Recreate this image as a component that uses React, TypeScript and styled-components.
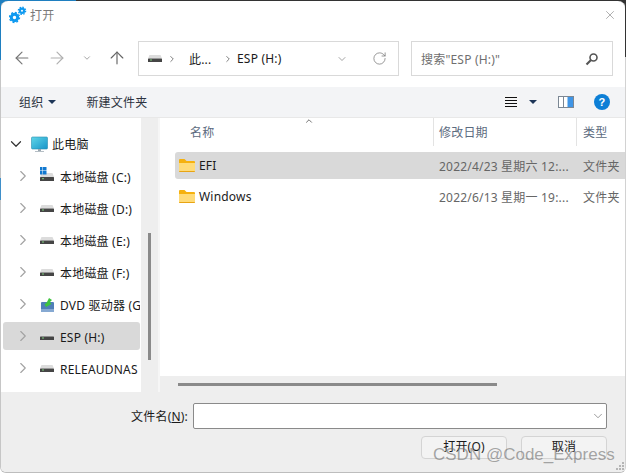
import React from "react";
import styled, { createGlobalStyle } from "styled-components";
import { ArrowLeft, ArrowRight, ArrowUp, ChevronDown, ChevronRight, RotateCw, X } from "lucide-react";

const Global = createGlobalStyle`
  html, body { margin: 0; padding: 0; background: #fff; }
  * { box-sizing: border-box; }
`;

const Backdrop = styled.div`
  width: 626px;
  height: 473px;
  overflow: hidden;
  background-color: #fff;
  background-image: linear-gradient(90deg, #1f7fc0 0 76px, #333 76px);
  background-size: 100% 20px;
  background-repeat: no-repeat;
  padding-top: 1px;
  position: relative;
`;

const Win = styled.div`
  width: 626px;
  height: 472px;
  background: #fff;
  border-radius: 8px 8px 6px 6px;
  border-left: 1px solid #c6c6c6;
  border-right: 1px solid #d2d2d2;
  border-bottom: 1px solid #bdbdbd;
  display: flex;
  flex-direction: column;
  font-family: "Noto Sans", "Noto Sans CJK SC", sans-serif;
  font-size: 12px;
  letter-spacing: 0.2px;
  color: #1a1a1a;
  overflow: hidden;
`;

const EdgeMark = styled.div<{ $left: number; $top: number; $h: number; $color: string }>`
  position: absolute;
  left: ${(p) => p.$left}px;
  top: ${(p) => p.$top}px;
  width: 1px;
  height: ${(p) => p.$h}px;
  background: ${(p) => p.$color};
`;

const TitleBar = styled.div`
  height: 28px;
  flex: none;
  display: flex;
  align-items: center;
  padding: 0 8px 0 8px;
  gap: 3px;
  color: #7a7a7a;
  font-size: 12px;
`;

const TitleText = styled.span`
  flex: 1;
`;

const AddressRow = styled.div`
  height: 58px;
  flex: none;
  display: flex;
  align-items: flex-start;
  padding: 12px 12px 11px 0;
`;

const NavGroup = styled.div`
  width: 137px;
  height: 33px;
  flex: none;
  display: flex;
  align-items: center;
  padding-left: 11px;
`;

const NavBtn = styled.span<{ $w: number }>`
  width: ${(p) => p.$w}px;
  flex: none;
  display: flex;
  align-items: center;
  color: #777;
`;

const AddressBox = styled.div`
  width: 261px;
  height: 35px;
  flex: none;
  border: 1px solid #d9d9d9;
  display: flex;
  align-items: center;
  padding: 0 0 0 9px;
  font-size: 12px;
`;

const Crumb = styled.span<{ $w: number }>`
  width: ${(p) => p.$w}px;
  flex: none;
  display: flex;
  align-items: center;
`;

const SearchBox = styled.div`
  width: 202px;
  height: 35px;
  margin-left: 12px;
  flex: none;
  border: 1px solid #d9d9d9;
  display: flex;
  align-items: center;
  justify-content: space-between;
  padding: 0 13px 0 9px;
  color: #6f6f6f;
`;

const Toolbar = styled.div`
  height: 31px;
  flex: none;
  background: #f3f4f6;
  border-bottom: 1px solid #e8e8e8;
  display: flex;
  align-items: center;
  padding: 0 15px 0 18px;
  color: #2c3340;
`;

const ToolItem = styled.span`
  display: flex;
  align-items: center;
  gap: 5px;
  margin-right: 30px;
`;

const Caret = styled.span`
  width: 0;
  height: 0;
  border-left: 4px solid transparent;
  border-right: 4px solid transparent;
  border-top: 4px solid #1d3557;
  display: inline-block;
`;

const Spacer = styled.div`
  flex: 1;
`;

const ViewIcon = styled.span`
  width: 16px;
  height: 16px;
  background: #f6f6f6;
  display: flex;
  align-items: center;
  justify-content: center;
  margin-right: 10px;
`;

const PaneIcon = styled.span`
  display: flex;
  margin: 0 20px 0 21px;
`;

const HelpIcon = styled.span`
  width: 16px;
  height: 16px;
  border-radius: 50%;
  background: #0d7fd6;
  color: #fff;
  font: bold 11px/16px "Liberation Sans", sans-serif;
  text-align: center;
`;

const Main = styled.div`
  flex: 1;
  min-height: 0;
  display: flex;
`;

const Sidebar = styled.div`
  width: 140px;
  flex: none;
  padding: 12px 0 0 2px;
  overflow: hidden;
`;

const TreeRow = styled.div<{ $selected?: boolean; $top?: boolean }>`
  height: 28px;
  margin-bottom: 4px;
  width: 137px;
  border-radius: 3px;
  background: ${(p) => (p.$selected ? "#d9d9d9" : "transparent")};
  display: flex;
  align-items: center;
  padding-left: ${(p) => (p.$top ? 4 : 11)}px;
  white-space: nowrap;
  overflow: hidden;
`;

const DriveLabel = styled.span`
  padding-top: 2px;
`;

const Chevron = styled.span<{ $w: number }>`
  width: ${(p) => p.$w}px;
  flex: none;
  display: flex;
  color: #a2a2a2;
`;

const DriveSlot = styled.span`
  width: 20px;
  flex: none;
  display: flex;
  position: relative;
  top: 1px;
`;

const SideScroll = styled.div`
  width: 17px;
  flex: none;
  background: #eeeeee;
  padding: 115px 0 0 7px;
`;

const SideThumb = styled.div`
  width: 3px;
  height: 127px;
  background: #8a8a8a;
`;

const Gutter = styled.div`
  width: 2px;
  flex: none;
  background: #f6f6f6;
`;

const Content = styled.div`
  flex: 1;
  min-width: 0;
  display: flex;
  flex-direction: column;
`;

const HeaderRow = styled.div`
  height: 28px;
  flex: none;
  display: flex;
  color: #5c6b80;
  position: relative;
`;

const SortMark = styled.span`
  position: absolute;
  left: 144px;
  top: -2px;
  display: flex;
  color: #555;
`;

const HeadCell = styled.div<{ $w: number; $pad: number; $line?: boolean }>`
  width: ${(p) => p.$w}px;
  flex: none;
  padding: 1px 0 0 ${(p) => p.$pad}px;
  line-height: 28px;
  border-right: ${(p) => (p.$line ? "1px solid #e3e3e3" : "none")};
`;

const FileList = styled.div`
  flex: 1;
  padding: 6px 0 0 15px;
`;

const FileRow = styled.div<{ $selected?: boolean }>`
  height: 27px;
  margin-bottom: 4px;
  display: flex;
  align-items: center;
  border-radius: 3px 0 0 3px;
  background: ${(p) => (p.$selected ? "#d9d9d9" : "transparent")};
  padding-left: 4px;
  white-space: nowrap;
`;

const FileName = styled.span`
  width: 260px;
  flex: none;
  display: flex;
  align-items: center;
  gap: 4px;
`;

const FileDate = styled.span`
  width: 144px;
  flex: none;
  color: #666;
`;

const FileType = styled.span`
  color: #666;
`;

const HScroll = styled.div`
  height: 16px;
  flex: none;
  background: #eeeeee;
  padding: 7px 0 0 18px;
`;

const HThumb = styled.div`
  width: 319px;
  height: 3px;
  background: #8a8a8a;
`;

const Footer = styled.div`
  height: 80px;
  flex: none;
  background: #eeeeee;
  padding: 11px 18px 0 0;
  position: relative;
`;

const NameRow = styled.div`
  display: flex;
  align-items: center;
  justify-content: flex-end;
  gap: 5px;
`;

const NameLabel = styled.span`
  color: #1a1a1a;
  & u { text-underline-offset: 1px; }
`;

const NameInput = styled.div`
  width: 414px;
  height: 26px;
  background: #fff;
  border: 1px solid #8a8a8a;
  border-radius: 2px;
  display: flex;
  align-items: center;
  justify-content: flex-end;
  padding-right: 1px;
  color: #666;
`;

const Buttons = styled.div`
  display: flex;
  justify-content: flex-end;
  gap: 14px;
  margin-top: 7px;
`;

const Btn = styled.div`
  width: 86px;
  height: 23px;
  border: 1px solid #d4d4d4;
  border-radius: 4px;
  background: #f3f3f3;
  text-align: center;
  line-height: 20px;
  color: #1a1a1a;
`;

const Watermark = styled.div`
  position: absolute;
  left: 433px;
  top: 445px;
  font-family: "Liberation Sans", sans-serif;
  font-size: 17px;
  line-height: 20px;
  color: rgba(110, 110, 110, 0.6);
  white-space: nowrap;
`;

const Grip = styled.svg`
  position: absolute;
  right: 0;
  bottom: 1px;
`;

const Gears = () => (
  <svg width="18" height="18" viewBox="0 0 18 18">
    <g fill="none" stroke="#0f9af0">
      <circle cx="5.500" cy="11.500" r="3.200" strokeWidth="3" />
      <circle cx="5.500" cy="11.500" r="5" strokeWidth="1.400" strokeDasharray="1.900 2" />
      <circle cx="13" cy="4.800" r="2.100" strokeWidth="2.200" />
      <circle cx="13" cy="4.800" r="3.700" strokeWidth="1.200" strokeDasharray="1.500 1.400" />
    </g>
  </svg>
);

const Drive = () => (
  <svg width="16" height="12" viewBox="0 0 16 12">
    <path d="M1.500 2 H12.500 L14 5.500 H0 Z" fill="#dcdcdc" />
    <rect x="0" y="5.500" width="14" height="3.500" rx=".6" fill="#454545" />
    <rect x="2" y="6.500" width="2" height="1" fill="#7fd07f" />
  </svg>
);

const SysDrive = () => (
  <svg width="16" height="20" viewBox="0 0 16 20">
    <path d="M1.500 6 H12.500 L14 10 H0 Z" fill="#dcdcdc" />
    <rect x="0" y="10" width="14" height="4" rx=".6" fill="#454545" />
    <rect x="2" y="11.200" width="2" height="1" fill="#7fd07f" />
    <rect x="-1" y="0" width="3.500" height="3.500" fill="#1279d0" />
    <rect x="3" y="0" width="3.500" height="3.500" fill="#1279d0" />
    <rect x="-1" y="4" width="3.500" height="3.500" fill="#1279d0" />
    <rect x="3" y="4" width="3.500" height="3.500" fill="#1279d0" />
  </svg>
);

const Dvd = () => (
  <svg width="16" height="16" viewBox="0 0 16 16">
    <rect x="1" y="5" width="13" height="10" rx="1" fill="#4f7fb8" />
    <path d="M1 12 H14 V15 H1 Z" fill="#86a9d2" />
    <path d="M9 1 L12 3 L10 5 L11.500 7 L6 10 L4.500 7 L6 6.500 L7.500 4 Z" fill="#3ec43e" />
  </svg>
);

const Monitor = () => (
  <svg width="17" height="17" viewBox="0 0 17 17" style={{ display: "block" }}>
    <defs>
      <linearGradient id="scr" x1="0" y1="0" x2="1" y2="1">
        <stop offset="0" stopColor="#5fd6e8" />
        <stop offset="1" stopColor="#1794c9" />
      </linearGradient>
    </defs>
    <rect x="0.500" y="1" width="16" height="12" rx="1" fill="url(#scr)" stroke="#2a8fb0" strokeWidth=".6" />
    <rect x="7" y="13" width="3" height="2" fill="#9aa7b0" />
    <rect x="4" y="15" width="9" height="1" fill="#b5bec5" />
  </svg>
);

const Folder = () => (
  <svg width="16" height="13" viewBox="0 0 16 13">
    <path d="M0 1 Q0 0 1 0 H5.500 L7.500 2 H15 Q16 2 16 3 V5 H0 Z" fill="#f5b10f" />
    <path d="M0 4 H16 V12 Q16 13 15 13 H1 Q0 13 0 12 Z" fill="#ffdb78" />
    <path d="M0 12 H16 V12.300 Q16 13 15 13 H1 Q0 13 0 12.300 Z" fill="#e8a413" />
  </svg>
);

const Search = () => (
  <svg width="14" height="14" viewBox="0 0 14 14" fill="none" stroke="#555">
    <circle cx="8.500" cy="5.500" r="3.500" strokeWidth="1.600" />
    <path d="M6 8 L1.500 12.500" strokeWidth="2.200" />
  </svg>
);

const Lines = () => (
  <svg width="12" height="10" viewBox="0 0 12 10" fill="#111">
    <rect y="0" width="12" height="1" />
    <rect y="3" width="12" height="1" />
    <rect y="6" width="12" height="1" />
    <rect y="9" width="12" height="1" />
  </svg>
);

const Pane = () => (
  <svg width="16" height="12" viewBox="0 0 16 12">
    <rect x=".5" y=".5" width="15" height="11" fill="#fff" stroke="#7b8794" />
    <rect x="5" y="1" width="1" height="10" fill="#7b8794" />
    <rect x="9.500" y="1" width="5.500" height="10" fill="#3f95e6" />
  </svg>
);

const drives = [
  { label: "本地磁盘 (C:)", icon: <SysDrive /> },
  { label: "本地磁盘 (D:)", icon: <Drive /> },
  { label: "本地磁盘 (E:)", icon: <Drive /> },
  { label: "本地磁盘 (F:)", icon: <Drive /> },
  { label: "DVD 驱动器 (G:)", icon: <Dvd /> },
  { label: "ESP (H:)", icon: <Drive />, selected: true },
  { label: "RELEAUDNAS", icon: <Drive /> },
];

export default function App() {
  return (
    <Backdrop>
      <Global />
      <Win>
        <TitleBar>
          <Gears />
          <TitleText>打开</TitleText>
          <X size={14} strokeWidth={1} color="#777" />
        </TitleBar>
        <AddressRow>
          <NavGroup>
            <NavBtn $w={35}><ArrowLeft size={20} strokeWidth={1.4} /></NavBtn>
            <NavBtn $w={35}><ArrowRight size={20} strokeWidth={1.4} color="#b0b0b0" /></NavBtn>
            <NavBtn $w={25}><ChevronDown size={10} strokeWidth={1.6} /></NavBtn>
            <NavBtn $w={20}><ArrowUp size={20} strokeWidth={1.4} color="#666" /></NavBtn>
          </NavGroup>
          <AddressBox>
            <Crumb $w={19}><Drive /></Crumb>
            <Crumb $w={22}><ChevronRight size={10} strokeWidth={2} color="#666" /></Crumb>
            <Crumb $w={34}>此...</Crumb>
            <Crumb $w={14}><ChevronRight size={10} strokeWidth={2} color="#666" /></Crumb>
            <Crumb $w={99}>ESP (H:)</Crumb>
            <Crumb $w={36}><ChevronDown size={12} strokeWidth={1.2} color="#666" /></Crumb>
            <RotateCw size={15} strokeWidth={1.2} color="#777" />
          </AddressBox>
          <SearchBox>
            <span>搜索"ESP (H:)"</span>
            <Search />
          </SearchBox>
        </AddressRow>
        <Toolbar>
          <ToolItem>组织 <Caret /></ToolItem>
          <ToolItem>新建文件夹</ToolItem>
          <Spacer />
          <ViewIcon><Lines /></ViewIcon>
          <Caret />
          <PaneIcon><Pane /></PaneIcon>
          <HelpIcon>?</HelpIcon>
        </Toolbar>
        <Main>
          <Sidebar>
            <TreeRow $top>
              <Chevron $w={24}><ChevronDown size={18} strokeWidth={1.6} color="#333" /></Chevron>
              <Chevron $w={21}><Monitor /></Chevron>
              <span>此电脑</span>
            </TreeRow>
            {drives.map((d) => (
              <TreeRow key={d.label} $selected={d.selected}>
                <Chevron $w={26}><ChevronRight size={18} strokeWidth={1.5} /></Chevron>
                <DriveSlot>{d.icon}</DriveSlot>
                <DriveLabel>{d.label}</DriveLabel>
              </TreeRow>
            ))}
          </Sidebar>
          <SideScroll><SideThumb /></SideScroll>
          <Gutter />
          <Content>
            <HeaderRow>
              <SortMark><ChevronDown size={10} style={{ transform: "rotate(180deg)" }} /></SortMark>
              <HeadCell $w={274} $pad={30} $line>名称</HeadCell>
              <HeadCell $w={143} $pad={5} $line>修改日期</HeadCell>
              <HeadCell $w={48} $pad={6}>类型</HeadCell>
            </HeaderRow>
            <FileList>
              <FileRow $selected>
                <FileName><Folder />EFI</FileName>
                <FileDate>2022/4/23 星期六 12:...</FileDate>
                <FileType>文件夹</FileType>
              </FileRow>
              <FileRow>
                <FileName><Folder />Windows</FileName>
                <FileDate>2022/6/13 星期一 19:...</FileDate>
                <FileType>文件夹</FileType>
              </FileRow>
            </FileList>
            <HScroll><HThumb /></HScroll>
          </Content>
        </Main>
        <Footer>
          <NameRow>
            <NameLabel>文件名(<u>N</u>):</NameLabel>
            <NameInput><ChevronDown size={14} strokeWidth={1.1} /></NameInput>
          </NameRow>
          <Buttons>
            <Btn>打开(O)</Btn>
            <Btn>取消</Btn>
          </Buttons>
          <Grip width="10" height="10" viewBox="0 0 10 10" fill="#b5b5b5">
            <rect x="7" y="1" width="2" height="2" />
            <rect x="4" y="4" width="2" height="2" />
            <rect x="7" y="4" width="2" height="2" />
            <rect x="1" y="7" width="2" height="2" />
            <rect x="4" y="7" width="2" height="2" />
            <rect x="7" y="7" width="2" height="2" />
          </Grip>
        </Footer>
      </Win>
      <EdgeMark $left={0} $top={0} $h={60} $color="#1f7fc0" />
      <EdgeMark $left={0} $top={178} $h={22} $color="#3f8fc9" />
      <EdgeMark $left={625} $top={0} $h={57} $color="#333" />
      <Watermark>CSDN @Code_Express</Watermark>
    </Backdrop>
  );
}
